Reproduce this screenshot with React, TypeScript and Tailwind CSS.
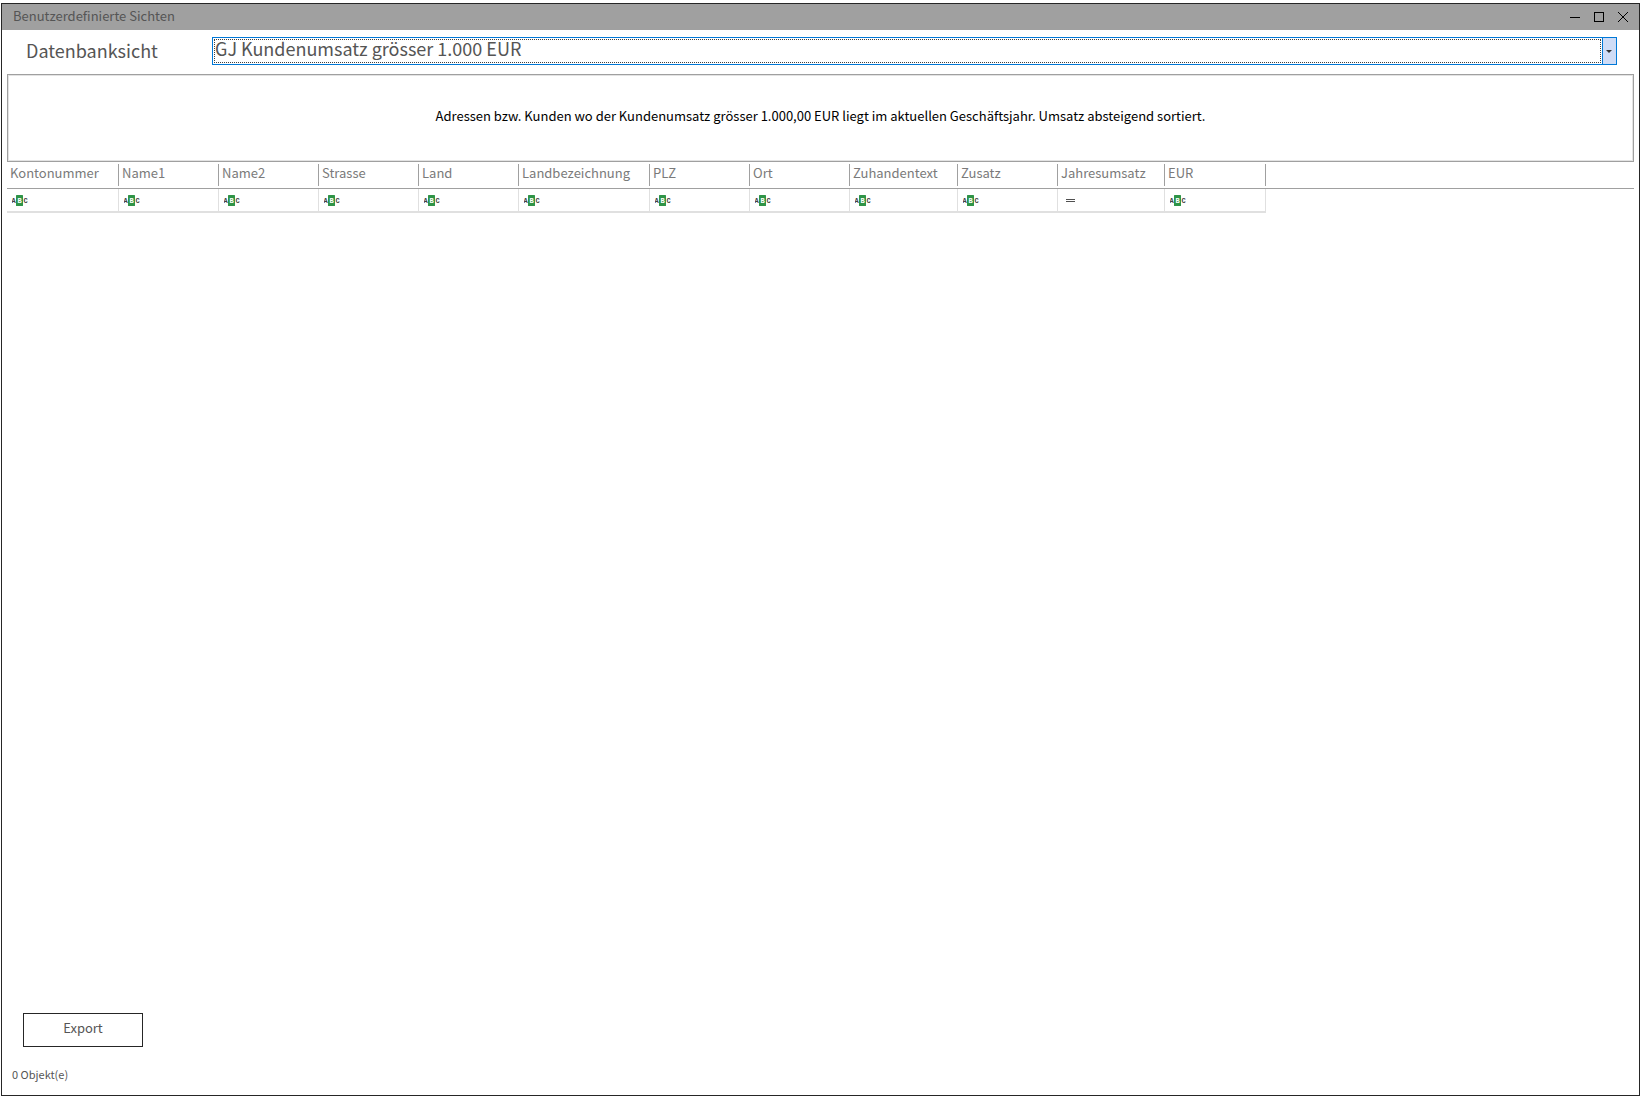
import React from "react";

type Column = { label: string; width: number; kind: "text" | "number" };

const columns: Column[] = [
  { label: "Kontonummer", width: 112, kind: "text" },
  { label: "Name1", width: 100, kind: "text" },
  { label: "Name2", width: 100, kind: "text" },
  { label: "Strasse", width: 100, kind: "text" },
  { label: "Land", width: 100, kind: "text" },
  { label: "Landbezeichnung", width: 131, kind: "text" },
  { label: "PLZ", width: 100, kind: "text" },
  { label: "Ort", width: 100, kind: "text" },
  { label: "Zuhandentext", width: 108, kind: "text" },
  { label: "Zusatz", width: 100, kind: "text" },
  { label: "Jahresumsatz", width: 107, kind: "number" },
  { label: "EUR", width: 101, kind: "text" },
];

function ContainsIcon() {
  return (
    <svg width="16" height="11" viewBox="0 0 16 11" className="block" aria-hidden="true">
      <rect x="4" y="0" width="7" height="11" rx="0.5" fill="#2f9447" />
      <g fontFamily="'Liberation Mono', monospace" fontWeight="700" fontSize="7">
        <text x="-0.6" y="8" fill="#404040">A</text>
        <text x="5.4" y="8" fill="#ffffff">B</text>
        <text x="11.4" y="8" fill="#404040">C</text>
      </g>
    </svg>
  );
}

function EqualsIcon() {
  return (
    <svg width="16" height="11" viewBox="0 0 16 11" className="block" shapeRendering="crispEdges" aria-hidden="true">
      <rect x="3" y="4" width="9" height="1" fill="#505050" />
      <rect x="3" y="6" width="9" height="1" fill="#505050" />
    </svg>
  );
}

function TitleBar() {
  return (
    <header className="flex h-[26px] items-center justify-between bg-[#a0a0a0] pr-1 pl-[11px]">
      <h1 className="pb-0.5 text-[13px] leading-5 text-[#555555]">Benutzerdefinierte Sichten</h1>
      <div className="flex text-black">
        <button type="button" aria-label="Minimieren" className="flex size-6 items-center justify-center">
          <svg width="10" height="10" shapeRendering="crispEdges"><rect y="5" width="10" height="1" /></svg>
        </button>
        <button type="button" aria-label="Maximieren" className="flex size-6 items-center justify-center">
          <svg width="10" height="10" shapeRendering="crispEdges">
            <rect x="0.5" y="0.5" width="9" height="9" fill="none" stroke="black" />
          </svg>
        </button>
        <button type="button" aria-label="Schliessen" className="flex size-6 items-center justify-center">
          <svg width="10" height="10"><path d="M0 0L10 10M10 0L0 10" stroke="black" /></svg>
        </button>
      </div>
    </header>
  );
}

export default function App() {
  return (
    <div className="flex h-screen flex-col bg-white pt-[3px] pr-1 pb-[3px] pl-px font-['Noto_Sans_CJK_SC',sans-serif]">
      <main className="flex min-h-0 flex-1 flex-col border border-[#262626]">
        <TitleBar />

        <div className="flex items-center pt-[7px] pr-[22px] pl-6">
          <label htmlFor="view" className="w-[186px] shrink-0 pb-0.5 text-[18px] leading-6 text-[#555555]">
            Datenbanksicht
          </label>
          <div className="flex h-7 min-w-0 flex-1 border border-[#0078d7]">
            <div className="m-px flex h-6 min-w-0 flex-1 items-center border border-dotted border-[#404040]">
              <select
                id="view"
                className="mb-1.5 h-7 min-w-0 flex-1 shrink-0 appearance-none bg-transparent text-[18px] leading-7 text-[#555555] outline-none"
              >
                <option>GJ Kundenumsatz grösser 1.000 EUR</option>
              </select>
            </div>
            <button
              type="button"
              aria-label="Liste öffnen"
              className="flex w-[14px] items-center justify-center border-l border-[#0078d7] bg-[#cfdcf6] pr-px"
            >
              <svg width="6" height="3" viewBox="0 0 6 3"><path d="M0 0H6L3 3Z" fill="#333333" /></svg>
            </button>
          </div>
        </div>

        <section className="mx-[5px] mt-[9px] flex h-[88px] shrink-0 items-center justify-center border border-[#a0a0a0] text-[13px] leading-5 text-black">
          <p className="flex size-full items-center justify-center border border-[#e3e3e3] pb-1">
            Adressen bzw. Kunden wo der Kundenumsatz grösser 1.000,00 EUR liegt im aktuellen Geschäftsjahr. Umsatz
            absteigend sortiert.
          </p>
        </section>

        <div className="mx-[5px] min-h-0 flex-1 overflow-hidden">
          <table className="w-full table-fixed border-separate border-spacing-0">
            <colgroup>
              {columns.map((c) => (
                <col key={c.label} style={{ width: c.width }} />
              ))}
              <col />
            </colgroup>
            <thead>
              <tr>
                {columns.map((c) => (
                  <th key={c.label} scope="col" className="border-b border-[#a0a0a0] p-0 py-0.5 text-left font-normal">
                    <div className="h-[22px] border-r border-[#a0a0a0] pl-[3px] text-[13px] leading-[18px] text-[#7a7a7a]">
                      {c.label}
                    </div>
                  </th>
                ))}
                <td className="border-b border-[#a0a0a0] p-0" />
              </tr>
            </thead>
            <tbody>
              <tr>
                {columns.map((c) => (
                  <td key={c.label} className="h-6 border-r border-b-2 border-[#e0e0e0] p-0 pl-[5px]">
                    {c.kind === "text" ? <ContainsIcon /> : <EqualsIcon />}
                  </td>
                ))}
                <td className="p-0" />
              </tr>
            </tbody>
          </table>
        </div>

        <footer className="flex flex-col items-start pb-[11px]">
          <button
            type="button"
            className="ml-[21px] h-[34px] w-[120px] border border-[#262626] bg-white pb-1 text-[13px] leading-5 text-[#555555]"
          >
            Export
          </button>
          <p className="mt-[17px] ml-2.5 text-[11px] leading-5 text-[#555555]">0 Objekt(e)</p>
        </footer>
      </main>
    </div>
  );
}
